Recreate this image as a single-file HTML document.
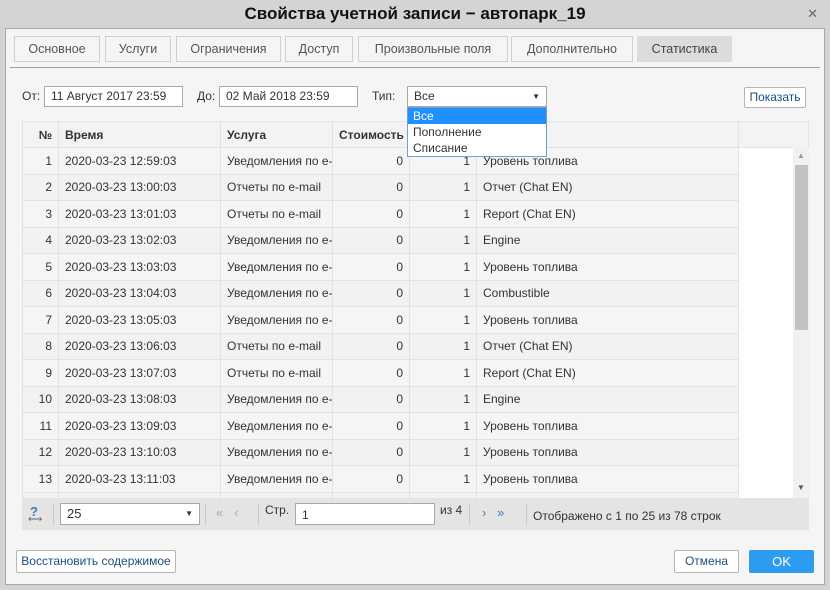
<!DOCTYPE html>
<html><head><meta charset="utf-8"><style>
*{box-sizing:border-box;margin:0;padding:0}
body{width:830px;height:590px;background:#d4d4d4;font-family:"Liberation Sans",sans-serif;font-size:12px;color:#333;position:relative;overflow:hidden}
.a{position:absolute}
.title{left:0;top:0;width:830px;height:28px;text-align:center;font-size:17px;font-weight:bold;line-height:27px;color:#111}
.x{right:12px;top:6px;font-size:13px;color:#666}
.body{left:5px;top:28px;width:820px;height:557px;background:#f5f5f5;border:1px solid #a8a8a8}
.tab{top:36px;height:26px;border:1px solid #d0d0d0;background:#f5f5f5;color:#555;font-size:12.5px;text-align:center;line-height:24px}
.inp{height:21px;border:1px solid #a9a9a9;background:#fff;padding-left:6px;line-height:19px}
.lbl{line-height:21px}
table{border-collapse:collapse;position:absolute;left:22px;top:121px;table-layout:fixed;width:771px}
td,th{height:26.5px;border:1px solid #e2e2e2;white-space:nowrap;overflow:hidden;text-overflow:clip;padding:0 6px;font-weight:normal;text-align:left}
th{background:#f3f3f3;font-weight:bold;color:#333;height:26px}
tr:nth-child(odd) td{background:#f2f2f2}
.r{text-align:right}
.btn{border:1px solid #b5b5b5;background:#fff;border-radius:2px;text-align:center;color:#1a4f80}
</style></head><body>
<div class="a title">Свойства учетной записи − автопарк_19</div>
<div class="a x">✕</div>
<div class="a body"></div>
<div class="a tab" style="left:14px;width:86px">Основное</div>
<div class="a tab" style="left:105px;width:66px">Услуги</div>
<div class="a tab" style="left:176px;width:105px">Ограничения</div>
<div class="a tab" style="left:285px;width:68px">Доступ</div>
<div class="a tab" style="left:358px;width:150px">Произвольные поля</div>
<div class="a tab" style="left:511px;width:122px">Дополнительно</div>
<div class="a tab" style="left:637px;width:95px;background:#dcdcdc;border-color:#dcdcdc;color:#444">Статистика</div>
<div class="a" style="left:10px;top:67px;width:810px;height:1px;background:#a0a0a0"></div>

<div class="a lbl" style="left:22px;top:86px">От:</div>
<div class="a inp" style="left:44px;top:86px;width:139px">11 Август 2017 23:59</div>
<div class="a lbl" style="left:197px;top:86px">До:</div>
<div class="a inp" style="left:219px;top:86px;width:139px">02 Май 2018 23:59</div>
<div class="a lbl" style="left:372px;top:86px">Тип:</div>
<div class="a inp" style="left:407px;top:86px;width:140px">Все<span style="position:absolute;right:6px;top:0;font-size:8px">▼</span></div>
<div class="a btn" style="left:744px;top:87px;width:62px;height:21px;line-height:19px">Показать</div>

<table>
<colgroup><col style="width:36px"><col style="width:162px"><col style="width:112px"><col style="width:77px"><col style="width:67px"><col style="width:262px"><col style="width:55px"></colgroup>
<tr><th class="r">№</th><th>Время</th><th>Услуга</th><th>Стоимость</th><th></th><th></th><th></th></tr>
<tr><td class="r">1</td><td>2020-03-23 12:59:03</td><td>Уведомления по e-mail</td><td class="r">0</td><td class="r">1</td><td>Уровень топлива</td><td></td></tr>
<tr><td class="r">2</td><td>2020-03-23 13:00:03</td><td>Отчеты по e-mail</td><td class="r">0</td><td class="r">1</td><td>Отчет (Chat EN)</td><td></td></tr>
<tr><td class="r">3</td><td>2020-03-23 13:01:03</td><td>Отчеты по e-mail</td><td class="r">0</td><td class="r">1</td><td>Report (Chat EN)</td><td></td></tr>
<tr><td class="r">4</td><td>2020-03-23 13:02:03</td><td>Уведомления по e-mail</td><td class="r">0</td><td class="r">1</td><td>Engine</td><td></td></tr>
<tr><td class="r">5</td><td>2020-03-23 13:03:03</td><td>Уведомления по e-mail</td><td class="r">0</td><td class="r">1</td><td>Уровень топлива</td><td></td></tr>
<tr><td class="r">6</td><td>2020-03-23 13:04:03</td><td>Уведомления по e-mail</td><td class="r">0</td><td class="r">1</td><td>Combustible</td><td></td></tr>
<tr><td class="r">7</td><td>2020-03-23 13:05:03</td><td>Уведомления по e-mail</td><td class="r">0</td><td class="r">1</td><td>Уровень топлива</td><td></td></tr>
<tr><td class="r">8</td><td>2020-03-23 13:06:03</td><td>Отчеты по e-mail</td><td class="r">0</td><td class="r">1</td><td>Отчет (Chat EN)</td><td></td></tr>
<tr><td class="r">9</td><td>2020-03-23 13:07:03</td><td>Отчеты по e-mail</td><td class="r">0</td><td class="r">1</td><td>Report (Chat EN)</td><td></td></tr>
<tr><td class="r">10</td><td>2020-03-23 13:08:03</td><td>Уведомления по e-mail</td><td class="r">0</td><td class="r">1</td><td>Engine</td><td></td></tr>
<tr><td class="r">11</td><td>2020-03-23 13:09:03</td><td>Уведомления по e-mail</td><td class="r">0</td><td class="r">1</td><td>Уровень топлива</td><td></td></tr>
<tr><td class="r">12</td><td>2020-03-23 13:10:03</td><td>Уведомления по e-mail</td><td class="r">0</td><td class="r">1</td><td>Уровень топлива</td><td></td></tr>
<tr><td class="r">13</td><td>2020-03-23 13:11:03</td><td>Уведомления по e-mail</td><td class="r">0</td><td class="r">1</td><td>Уровень топлива</td><td></td></tr>
<tr><td class="r"></td><td></td><td></td><td></td><td></td><td></td><td></td></tr>
</table>
<div class="a" style="left:739px;top:148px;width:54px;height:350px;background:#fff"></div>
<div class="a" style="left:793px;top:121px;width:16px;height:27px;background:#f3f3f3;border-top:1px solid #e2e2e2;border-right:1px solid #e2e2e2"></div>
<div class="a" style="left:793px;top:147px;width:16px;height:351px;background:#f1f1f1"></div>
<div class="a" style="left:795px;top:165px;width:13px;height:165px;background:#c1c1c1"></div>
<div class="a" style="left:797px;top:151px;font-size:8px;color:#999">▲</div>
<div class="a" style="left:797px;top:483px;font-size:8px;color:#555">▼</div>

<div class="a" style="left:22px;top:498px;width:787px;height:32px;background:#e4e4e4"></div>
<div class="a" style="left:30px;top:504px;color:#3a7fc1;font-size:13px;font-weight:bold">?</div>
<div class="a" style="left:28px;top:514px;color:#666;font-size:10px">⟷</div>
<div class="a" style="left:53px;top:503px;width:1px;height:22px;background:#c8c8c8"></div>
<div class="a inp" style="left:60px;top:503px;width:140px;height:22px;line-height:20px;font-size:13px">25<span style="position:absolute;right:6px;top:0;font-size:8px">▼</span></div>
<div class="a" style="left:205px;top:503px;width:1px;height:22px;background:#c8c8c8"></div>
<div class="a" style="left:216px;top:505px;color:#aaa;font-size:13px">«&nbsp;&nbsp;&nbsp;‹</div>
<div class="a" style="left:258px;top:503px;width:1px;height:22px;background:#c8c8c8"></div>
<div class="a" style="left:265px;top:503px">Стр.</div>
<div class="a inp" style="left:295px;top:503px;width:140px;height:22px;line-height:22px">1</div>
<div class="a" style="left:440px;top:503px">из 4</div>
<div class="a" style="left:469px;top:503px;width:1px;height:22px;background:#c8c8c8"></div>
<div class="a" style="left:482px;top:505px;color:#3a7fc1;font-size:13px">›&nbsp;&nbsp;&nbsp;»</div>
<div class="a" style="left:526px;top:503px;width:1px;height:22px;background:#c8c8c8"></div>
<div class="a" style="left:533px;top:509px">Отображено с 1 по 25 из 78 строк</div>

<div class="a btn" style="left:16px;top:550px;width:160px;height:23px;line-height:21px">Восстановить содержимое</div>
<div class="a btn" style="left:674px;top:550px;width:65px;height:23px;line-height:21px">Отмена</div>
<div class="a" style="left:749px;top:550px;width:65px;height:23px;line-height:23px;background:#2d9bf0;color:#fff;text-align:center;border-radius:2px;font-size:13px">OK</div>

<div class="a" style="left:407px;top:107px;width:140px;height:50px;background:#fff;border:1px solid #7a9cd3">
<div style="background:#1e90ff;color:#fff;padding-left:5px;height:16px;line-height:16px">Все</div>
<div style="padding-left:5px;height:16px;line-height:16px">Пополнение</div>
<div style="padding-left:5px;height:16px;line-height:16px">Списание</div>
</div>
</body></html>
